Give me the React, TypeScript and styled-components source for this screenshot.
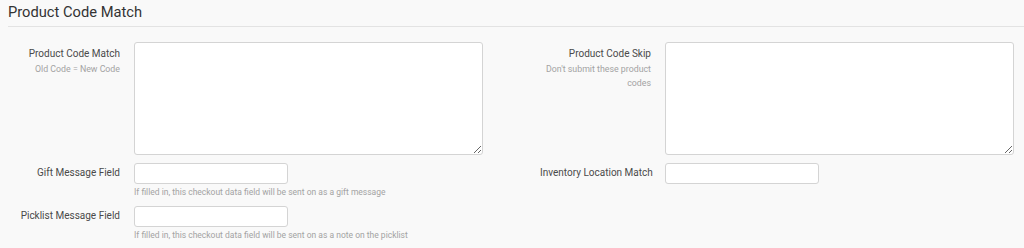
import React from "react";
import styled, { createGlobalStyle } from "styled-components";

const Global = createGlobalStyle`
  html, body { margin: 0; padding: 0; background: #f9f9f9; }
  body { font-family: Roboto, "Liberation Sans", Arial, sans-serif; color: #444; }
  * { box-sizing: border-box; }
`;

const Page = styled.div`
  width: 1024px;
  height: 248px;
  background: #f9f9f9;
  padding-left: 8px;
  overflow: hidden;
`;

const Title = styled.h3`
  margin: 0;
  padding-top: 2px;
  height: 27px;
  font-size: 14.7px;
  font-weight: 400;
  line-height: 20px;
  color: #333;
  border-bottom: 1px solid #e3e3e3;
`;

const Columns = styled.div`
  display: grid;
  grid-template-columns: 474px 474px;
  column-gap: 57px;
  padding-left: 1px;
  padding-top: 15px;
`;

const Column = styled.div`
  display: flex;
  flex-direction: column;
  gap: 8px;
`;

const Row = styled.div`
  display: grid;
  grid-template-columns: 111px 1fr;
  column-gap: 14px;
  align-items: start;
`;

const LabelCell = styled.div<{ $pad: number }>`
  text-align: right;
  padding-top: ${(p) => p.$pad}px;
`;

const Label = styled.label`
  display: block;
  font-size: 10px;
  line-height: 14px;
  color: #4a4a4a;
  white-space: nowrap;
`;

const LabelHint = styled.div`
  font-size: 8.8px;
  line-height: 14px;
  color: #a3a3a3;
  margin-top: 1px;
`;

const Control = styled.div`
  display: flex;
  flex-direction: column;
`;

const TextArea = styled.textarea`
  display: block;
  width: 349px;
  height: 113px;
  margin: 0;
  border: 1px solid #d4d4d4;
  border-radius: 3px;
  background: #fff;
  font-family: inherit;
  resize: both;
`;

const Input = styled.input`
  display: block;
  width: 154px;
  height: 21px;
  margin: 0;
  border: 1px solid #d4d4d4;
  border-radius: 3px;
  background: #fff;
  font-family: inherit;
  padding: 0 6px;
`;

const Help = styled.div`
  font-size: 8.5px;
  line-height: 12px;
  color: #a3a3a3;
  margin-top: 2px;
  white-space: nowrap;
`;

export default function App() {
  return (
    <Page>
      <Global />
      <Title>Product Code Match</Title>
      <Columns>
        <Column>
          <Row>
            <LabelCell $pad={5}>
              <Label>Product Code Match</Label>
              <LabelHint>Old Code = New Code</LabelHint>
            </LabelCell>
            <Control>
              <TextArea />
            </Control>
          </Row>
          <Row>
            <LabelCell $pad={3}>
              <Label>Gift Message Field</Label>
            </LabelCell>
            <Control>
              <Input />
              <Help>If filled in, this checkout data field will be sent on as a gift message</Help>
            </Control>
          </Row>
          <Row>
            <LabelCell $pad={3}>
              <Label>Picklist Message Field</Label>
            </LabelCell>
            <Control>
              <Input />
              <Help>If filled in, this checkout data field will be sent on as a note on the picklist</Help>
            </Control>
          </Row>
        </Column>
        <Column>
          <Row>
            <LabelCell $pad={5}>
              <Label>Product Code Skip</Label>
              <LabelHint>Don't submit these product codes</LabelHint>
            </LabelCell>
            <Control>
              <TextArea />
            </Control>
          </Row>
          <Row>
            <LabelCell $pad={3}>
              <Label>Inventory Location Match</Label>
            </LabelCell>
            <Control>
              <Input />
            </Control>
          </Row>
        </Column>
      </Columns>
    </Page>
  );
}
